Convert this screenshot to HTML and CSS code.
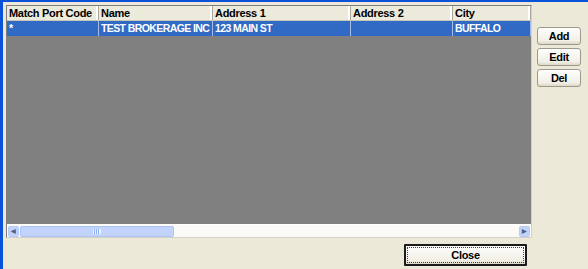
FILE: index.html
```html
<!DOCTYPE html>
<html>
	<head>
		<meta charset="UTF-8">
		<title>Match Port Codes</title>
		<link rel="stylesheet" href="styles.css">
	</head>
	<body>
		<div class="window">
			<div class="main">
				<div class="grid">
					<div class="row header">
						<span class="cell c1">Match Port Code</span>
						<span class="cell c2">Name</span>
						<span class="cell c3">Address 1</span>
						<span class="cell c4">Address 2</span>
						<span class="cell c5">City</span>
					</div>
					<div class="row selected">
						<span class="cell c1">*</span>
						<span class="cell c2">TEST BROKERAGE INC</span>
						<span class="cell c3">123 MAIN ST</span>
						<span class="cell c4"></span>
						<span class="cell c5">BUFFALO</span>
					</div>
					<div class="empty"></div>
					<div class="hscroll">
						<span class="arrow">&#9664;</span>
						<span class="thumb"><span class="grip"></span></span>
						<span class="track"></span>
						<span class="arrow">&#9654;</span>
					</div>
				</div>
				<div class="footer">
					<button class="btn close">Close</button>
				</div>
			</div>
			<div class="side">
				<button class="btn small">Add</button>
				<button class="btn small">Edit</button>
				<button class="btn small">Del</button>
			</div>
		</div>
	</body>
</html>
```

FILE: styles.css
```css
*{
	margin: 0;
	padding: 0;
	box-sizing: border-box;
}
body{
	width: 588px;
	height: 269px;
	background: #ece9d8;
	font-family: "Liberation Sans", Arial, sans-serif;
	font-size: 11px;
	font-weight: bold;
	letter-spacing: -0.3px;
	overflow: hidden;
}
.window{
	display: flex;
	height: 269px;
	border-top: 2px solid #0a53d9;
	border-left: 3px solid #0a53d9;
}
.main{
	display: flex;
	flex-direction: column;
	padding: 3px 0 0 3px;
}
.grid{
	display: flex;
	flex-direction: column;
	width: 526px;
	height: 233px;
	border: 1px solid #7f7f7f;
	border-right-color: #d4d0c8;
	border-bottom-color: #d4d0c8;
	background: #808080;
}
.row{
	display: flex;
	height: 15px;
}
.cell{
	padding-left: 2px;
	line-height: 14px;
	white-space: nowrap;
	overflow: hidden;
}
.c1{ width: 92px; }
.c2{ width: 114px; }
.c3{ width: 138px; }
.c4{ width: 102px; }
.c5{ width: 78px; }
.header{
	background: #ebeadb;
	border-bottom: 1px solid #cbc7b8;
	color: #000;
}
.header .cell{
	border-right: 1px solid #aca899;
	box-shadow: inset -2px 0 0 #fff;
}
.selected{
	background: #316ac5;
	color: #fff;
	font-size: 10.5px;
	letter-spacing: -0.6px;
}
.selected .cell{
	border-right: 1px solid #a5bde6;
}
.empty{
	flex: 1;
}
.hscroll{
	display: flex;
	align-items: center;
	height: 13px;
	background: #fbfaf6;
	border-top: 1px solid #fff;
	padding: 0 1px;
}
.arrow{
	width: 11px;
	height: 11px;
	background: #c1d3fb;
	border: 1px solid #b8cbf5;
	border-radius: 2px;
	color: #4d6185;
	font-size: 6px;
	line-height: 9px;
	text-align: center;
}
.thumb{
	display: flex;
	align-items: center;
	justify-content: center;
	width: 154px;
	height: 11px;
	margin-left: 1px;
	background: #c3d4fc;
	border: 1px solid #aec4f4;
	border-radius: 2px;
}
.grip{
	width: 8px;
	height: 5px;
	border-left: 1px solid #eef4fe;
	border-right: 1px solid #eef4fe;
	background: repeating-linear-gradient(90deg, #8cb0f8 0 1px, #eef4fe 1px 2px);
}
.track{
	flex: 1;
}
.footer{
	display: flex;
	justify-content: flex-end;
	padding: 6px 0 0 0;
}
.btn{
	font-family: "Liberation Sans", Arial, sans-serif;
	font-size: 11px;
	font-weight: bold;
	letter-spacing: -0.3px;
	color: #000;
	background: linear-gradient(#fefefd, #f1efe6 80%, #dcd8c6);
	border: 1px solid #003c74;
	border-radius: 3px;
	cursor: pointer;
}
.close{
	width: 123px;
	height: 22px;
	margin-right: 5px;
	border: 2px solid #1b1b1b;
	border-radius: 1px;
	outline: 1px dotted #444;
	outline-offset: -4px;
}
.side{
	display: flex;
	flex-direction: column;
	gap: 3px;
	padding: 25px 0 0 5px;
}
.small{
	width: 44px;
	height: 18px;
	border-color: #9d9a8c;
}
```
